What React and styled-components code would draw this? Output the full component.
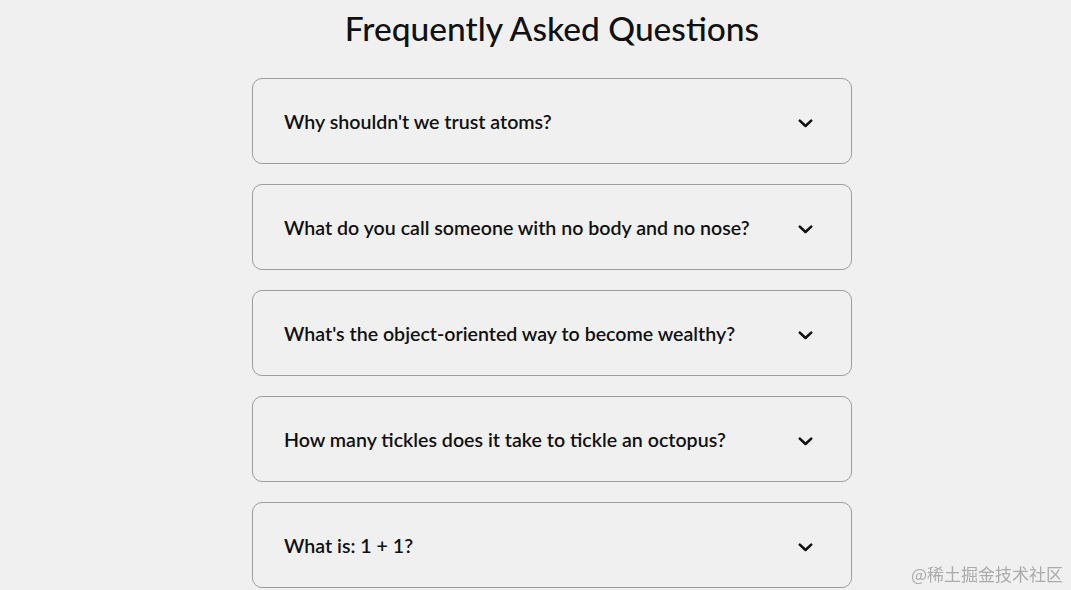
import React from "react";
import styled, { createGlobalStyle } from "styled-components";

const Global = createGlobalStyle`
  html, body { margin: 0; padding: 0; background: #f0f0f0; }
  body { font-family: "Lato", "Noto Sans", sans-serif; color: #111; }
`;

const Page = styled.div`
  display: flex;
  flex-direction: column;
  align-items: center;
  padding-left: 33px;
  min-height: 590px;
  box-sizing: border-box;
`;

const Title = styled.h1`
  margin: 8px 0 0;
  font-size: 33.5px;
  line-height: 40px;
  font-weight: 500;
  color: #111;
`;

const List = styled.div`
  width: 600px;
  margin-top: 30px;
  display: flex;
  flex-direction: column;
  gap: 20px;
`;

const Item = styled.div`
  box-sizing: border-box;
  height: 86px;
  border: 1px solid #9c9c9c;
  border-radius: 10px;
  display: flex;
  align-items: center;
  justify-content: space-between;
  padding: 0 38px 0 31px;
`;

const Question = styled.span`
  font-size: 19.6px;
  font-weight: 600;
  color: #111;
`;

const Toggle = styled.svg`
  display: block;
  width: 15px;
  height: 9px;
  margin-top: 4px;
`;

const Chevron = () => (
  <Toggle viewBox="0 0 15 9">
    <polyline
      points="1.8,1.6 7.5,7 13.2,1.6"
      fill="none"
      stroke="#111"
      strokeWidth="2.6"
      strokeLinecap="round"
      strokeLinejoin="round"
    />
  </Toggle>
);

const Watermark = styled.div`
  position: fixed;
  right: 8px;
  bottom: 4px;
  font-family: "Noto Sans CJK SC", serif;
  font-size: 17px;
  color: #ababab;
`;

const questions = [
  "Why shouldn't we trust atoms?",
  "What do you call someone with no body and no nose?",
  "What's the object-oriented way to become wealthy?",
  "How many tickles does it take to tickle an octopus?",
  "What is: 1 + 1?",
];

export default function App() {
  return (
    <>
      <Global />
      <Page>
        <Title>Frequently Asked Questions</Title>
        <List>
          {questions.map((q) => (
            <Item key={q}>
              <Question>{q}</Question>
              <Chevron />
            </Item>
          ))}
        </List>
      </Page>
      <Watermark>@稀土掘金技术社区</Watermark>
    </>
  );
}
